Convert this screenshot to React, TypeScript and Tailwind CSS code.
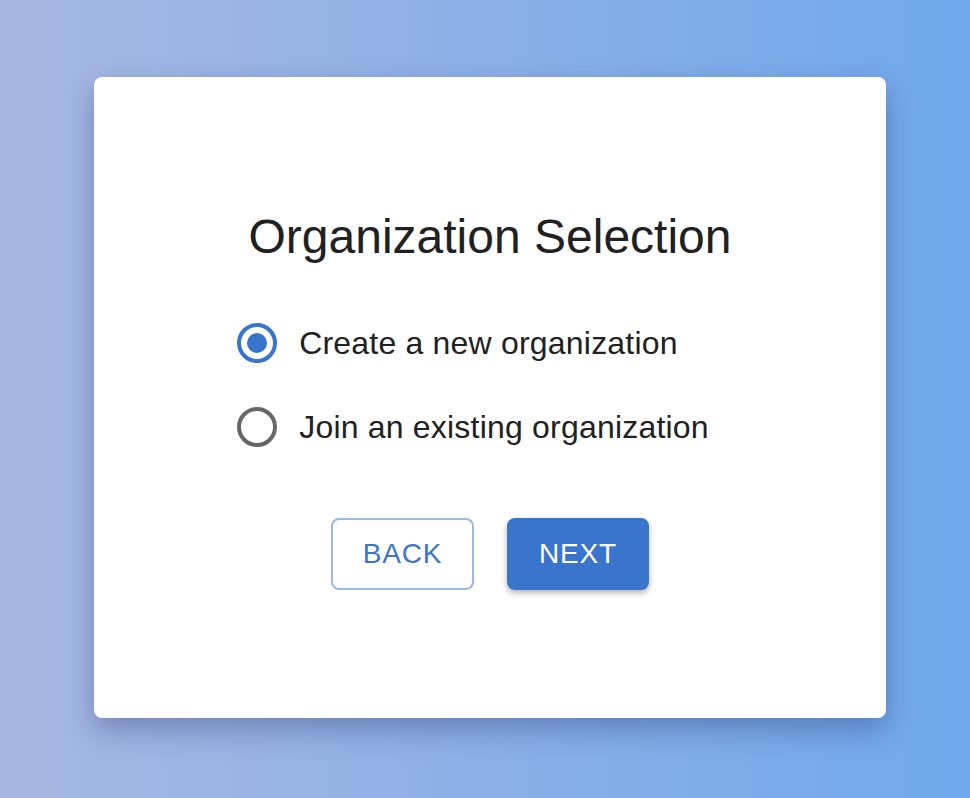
import { useState } from "react";

const options = [
  { id: "create", label: "Create a new organization" },
  { id: "join", label: "Join an existing organization" },
];

export default function App() {
  const [choice, setChoice] = useState("create");

  return (
    <div className="min-h-[798px] w-full bg-gradient-to-r from-[#a8b7e1] to-[#6fa8eb] pl-[94px] pr-[84px] pt-[77px] pb-[80px] font-['Liberation_Sans',Arial,sans-serif]">
      <div className="flex h-[641px] w-[792px] flex-col items-center justify-center rounded-[8px] bg-white shadow-[0_12px_28px_rgba(30,50,110,0.35)]">
        <h1 className="text-[48px] leading-[64px] text-[#212121]">Organization Selection</h1>

        <div className="mt-[32px] flex flex-col pr-[34px]">
          {options.map((opt) => {
            const active = choice === opt.id;
            return (
              <label
                key={opt.id}
                onClick={() => setChoice(opt.id)}
                className="flex h-[84px] cursor-pointer items-center gap-[22px]"
              >
                <span
                  className={
                    active
                      ? "flex h-[40px] w-[40px] items-center justify-center rounded-full border-[4px] border-[#3a75cd]"
                      : "flex h-[40px] w-[40px] items-center justify-center rounded-full border-[4px] border-[#666666]"
                  }
                >
                  {active && <span className="h-[20px] w-[20px] rounded-full bg-[#3a75cd]" />}
                </span>
                <span className="text-[32px] leading-[40px] tracking-[0.2px] text-[#212121]">{opt.label}</span>
              </label>
            );
          })}
        </div>

        <div className="mt-[49px] flex gap-[33px]">
          <button className="h-[72px] w-[143px] rounded-[8px] border-2 border-[#9bb8e8] bg-white text-[28px] tracking-[0.8px] text-[#3a75cd]">
            BACK
          </button>
          <button className="h-[72px] w-[142px] rounded-[8px] bg-[#3a75cd] text-[28px] tracking-[0.8px] text-white shadow-[0_3px_6px_rgba(0,0,0,0.3)]">
            NEXT
          </button>
        </div>
      </div>
    </div>
  );
}
